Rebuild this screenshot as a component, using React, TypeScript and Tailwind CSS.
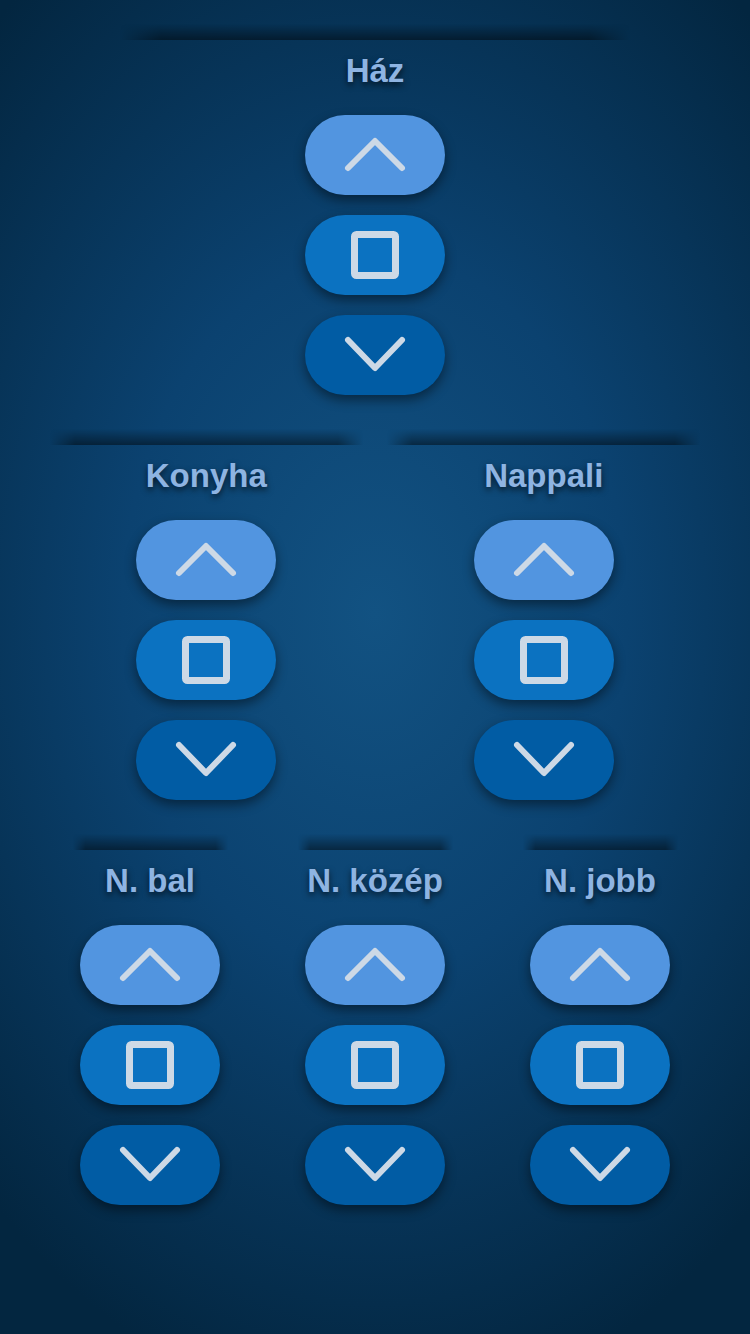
const groups: { title: string; line: string }[][] = [
  [{ title: "Ház", line: "w-[510px]" }],
  [
    { title: "Konyha", line: "w-[313px]" },
    { title: "Nappali", line: "w-[313px]" },
  ],
  [
    { title: "N. bal", line: "w-[155px]" },
    { title: "N. közép", line: "w-[155px]" },
    { title: "N. jobb", line: "w-[155px]" },
  ],
];

const UpIcon = () => (
  <svg viewBox="0 0 140 80" className="w-[140px] h-[80px]">
    <polyline points="43,53 70,26 97,53" fill="none" stroke="#cdd9e6" strokeWidth="6" strokeLinecap="round" strokeLinejoin="round" />
  </svg>
);

const StopIcon = () => (
  <svg viewBox="0 0 140 80" className="w-[140px] h-[80px]">
    <rect x="49.5" y="19.5" width="41" height="41" rx="2" fill="none" stroke="#cdd9e6" strokeWidth="7" />
  </svg>
);

const DownIcon = () => (
  <svg viewBox="0 0 140 80" className="w-[140px] h-[80px]">
    <polyline points="43,25 70,53 97,25" fill="none" stroke="#cdd9e6" strokeWidth="6" strokeLinecap="round" strokeLinejoin="round" />
  </svg>
);

const Column = ({ title, line }: { title: string; line: string }) => (
  <div className="flex-1 flex flex-col items-center">
    <div
      className={`${line} h-[16px] bg-gradient-to-b from-transparent to-black/45 [mask-image:linear-gradient(to_right,transparent,black_8%,black_92%,transparent)]`}
    />
    <div className="mt-[15px] h-[32px] leading-[32px] text-[33px] font-bold text-[#8eb4e2] font-['Liberation_Sans',Arial,sans-serif] [text-shadow:0_3px_6px_rgba(0,0,0,0.65)]">
      {title}
    </div>
    <div className="mt-[28px] flex flex-col gap-5">
      <button className="w-[140px] h-[80px] rounded-full bg-[#5295e0] shadow-[0_5px_12px_rgba(0,0,0,0.45)]">
        <UpIcon />
      </button>
      <button className="w-[140px] h-[80px] rounded-full bg-[#0b72c1] shadow-[0_5px_12px_rgba(0,0,0,0.45)]">
        <StopIcon />
      </button>
      <button className="w-[140px] h-[80px] rounded-full bg-[#015ca4] shadow-[0_5px_12px_rgba(0,0,0,0.45)]">
        <DownIcon />
      </button>
    </div>
  </div>
);

export default function App() {
  return (
    <div className="min-h-[1334px] w-full pt-[24px] px-[37.5px] flex flex-col gap-[34px] bg-[radial-gradient(ellipse_75%_60%_at_50%_46%,#125282_0%,#0b4270_45%,#032640_100%)]">
      {groups.map((row, i) => (
        <div key={i} className="flex">
          {row.map((c) => (
            <Column key={c.title} {...c} />
          ))}
        </div>
      ))}
    </div>
  );
}
